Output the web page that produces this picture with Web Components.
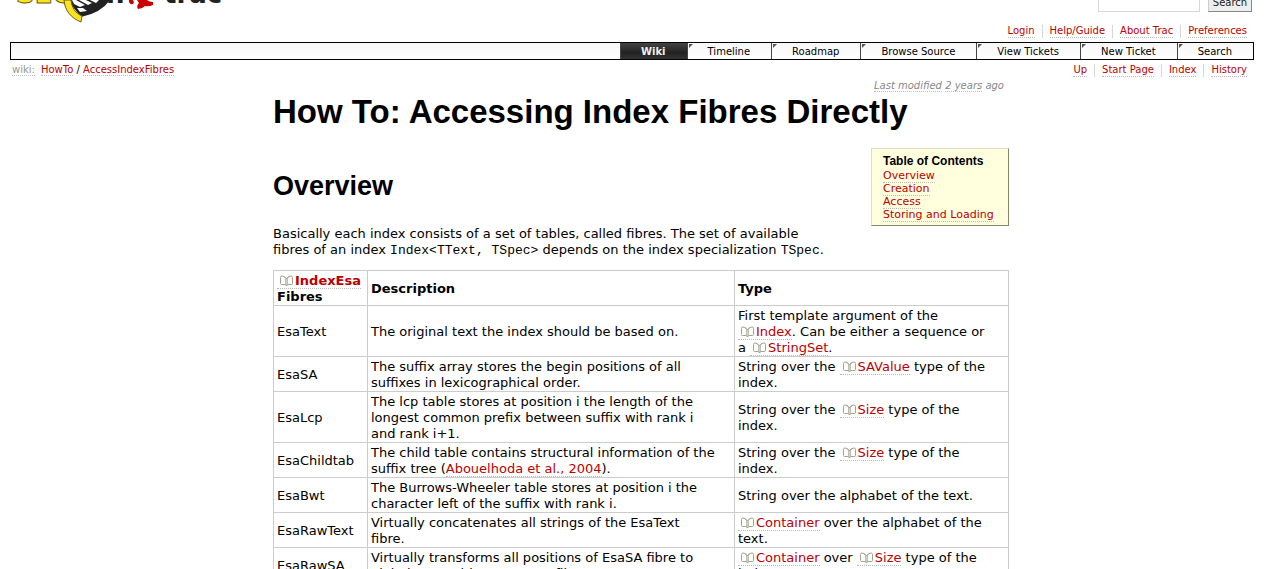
<!DOCTYPE html>
<html lang="en"><head><meta charset="utf-8"><title>AccessIndexFibres</title>
<style>
body{margin:0;background:#fff;color:#000;font:13px/16px "DejaVu Sans",Verdana,sans-serif}
</style></head><body><trac-page></trac-page>
<script>
const LINK='a{color:#b00;text-decoration:none;border-bottom:1px dotted #bbb}';
function define(name,html,after){
  customElements.define(name,class extends HTMLElement{
    constructor(){super();this.attachShadow({mode:'open'}).innerHTML=html;}
    connectedCallback(){if(after)after(this,this.shadowRoot);}
  });
}
define('trac-logo',`<style>
:host{display:block;width:240px;height:24px;overflow:hidden}
svg{display:block}text{font-family:"DejaVu Sans",sans-serif;font-weight:bold}
</style><svg width="240" height="24" role="img" aria-label="SeqAn trac">
<text x="16" y="3" font-size="26" fill="#fde31c" stroke="#665c20" stroke-width="1">SEQ</text>
<text x="86" y="3" font-size="26" fill="#222">An</text>
<path d="M68 0H110Q101 13 81 17Q75 10 68 0Z" fill="#222"/>
<path d="M72 0H76L85 5L80 7L74 4ZM79 0H86L92 3L88 5ZM90 0H99L96 3ZM77 8L83 8L87 11L80 12Z" fill="#fff"/>
<path d="M64 0C65 11 71 18 81 22L82 16C75 13 72 8 71 0Z" fill="#fde31c" stroke="#665c20" stroke-width="1"/>
<path d="M129 0H133L134 3Q131 6 129 2ZM137 0H147Q149 2 153 2V5Q149 7 145 6Q142 9 138 9Q136 6 139 3Z" fill="#c00"/>
<text x="164" y="3" font-size="26" fill="#222">trac</text>
</svg>`);
define('trac-search',`<style>
:host{display:block}form{display:flex;gap:8px;align-items:flex-end}
input{box-sizing:border-box;width:102px;height:20px;border:1px solid #d7d7d7;background:#fff;margin:0}
button{box-sizing:border-box;height:20px;width:44px;padding:0;border:1px solid #ccc;border-right-color:#888;border-bottom-color:#888;background:#eee;color:#222;font:10px "DejaVu Sans",sans-serif}
</style><form role="search"><input type="text" aria-label="Search"><button type="button">Search</button></form>`);
define('trac-links',`<style>${LINK}
:host{display:block;font-size:10px;line-height:12px}
ul{display:flex;list-style:none;margin:0;padding:0}
li{padding:0 7px;border-left:1px solid #d7d7d7}li:first-child{border:0}li:last-child{padding-right:0}
li a{display:block}
</style><ul></ul>`,(h,r)=>{r.querySelector('ul').innerHTML=h.getAttribute('items').split('|').map(t=>'<li><a href="#">'+t+'</a></li>').join('');});
define('trac-tab',`<style>
:host{display:block;border-left:1px solid #444;position:relative}
a{display:block;padding:1px 21px 0 20px;color:#000;text-decoration:none;font-size:10px;line-height:15px}
:host::before{content:"";position:absolute;left:1px;top:1px;border-top:4px solid #555;border-right:4px solid transparent}
:host([active]){background:linear-gradient(#444,#222 60%,#333)}
:host([active])::before{display:none}
:host([active]) a{color:#eee;font-weight:bold}
</style><a href="#"><slot></slot></a>`);
define('trac-nav',`<style>
:host{display:flex;justify-content:flex-end;border:1px solid #000;background:linear-gradient(#f7f7f7,#fff);margin:0 10px}
</style><slot></slot>`);
define('trac-crumbs',`<style>${LINK}
:host{display:block;font-size:10px;line-height:12px}.p{color:#998;border-bottom-color:#bbb;margin-right:6px}
</style><a class="p" href="#">wiki:</a><a href="#">HowTo</a> / <a href="#">AccessIndexFibres</a>`);
define('trac-ref',`<style>${LINK}
:host{display:inline}
svg{width:13px;height:12px;margin:0 2px 0 3px;vertical-align:-2px}
</style><a href="#"><svg viewBox="0 0 13 12" fill="none" stroke="#a3a390"><path d="M5.5 9.5H1.5Q.5 9.5 .5 8.5V2.5Q.5 1 2 1Q5 1 5.8 3.5V10.5H7.2V3.5Q8 1 11 1Q12.5 1 12.5 2.5V8.5Q12.5 9.5 11.5 9.5H7.5"/><path d="M4 1.5L6.5 4L9 1.5"/></svg><slot></slot></a>`);
define('trac-toc',`<style>${LINK}
:host{display:block;box-sizing:border-box;width:138px;background:#ffd;border:1px solid #ddc;border-right-color:#886;border-bottom-color:#886;padding:5px 11px 4px;font-size:11px;line-height:13px;white-space:nowrap}
h4{margin:0;font:bold 12px/15px "Liberation Sans",Arial,sans-serif}
ol{list-style:none;margin:0;padding:0}
</style><h4>Table of Contents</h4><ol><li><a href="#">Overview</a></li><li><a href="#">Creation</a></li><li><a href="#">Access</a></li><li><a href="#">Storing and Loading</a></li></ol>`);
define('fibre-table',`<style>${LINK}
:host{display:block}
table{width:100%;table-layout:fixed;border-collapse:collapse}
td,th{border:1px solid #ccc;padding:2px 3px 0;text-align:left;vertical-align:middle}
.a{width:94px}.b{width:367px}
</style><table><colgroup><col class="a"><col class="b"><col></colgroup>
<thead><tr><th><trac-ref>IndexEsa</trac-ref> Fibres</th><th>Description</th><th>Type</th></tr></thead><tbody>
<tr><td>EsaText</td><td>The original text the index should be based on.</td><td>First template argument of the<br><trac-ref>Index</trac-ref>. Can be either a sequence or<br>a <trac-ref>StringSet</trac-ref>.</td></tr>
<tr><td>EsaSA</td><td>The suffix array stores the begin positions of all<br>suffixes in lexicographical order.</td><td>String over the <trac-ref>SAValue</trac-ref> type of the<br>index.</td></tr>
<tr><td>EsaLcp</td><td>The lcp table stores at position i the length of the<br>longest common prefix between suffix with rank i<br>and rank i+1.</td><td>String over the <trac-ref>Size</trac-ref> type of the<br>index.</td></tr>
<tr><td>EsaChildtab</td><td>The child table contains structural information of the<br>suffix tree (<a href="#">Abouelhoda et al., 2004</a>).</td><td>String over the <trac-ref>Size</trac-ref> type of the<br>index.</td></tr>
<tr><td>EsaBwt</td><td>The Burrows-Wheeler table stores at position i the<br>character left of the suffix with rank i.</td><td>String over the alphabet of the text.</td></tr>
<tr><td>EsaRawText</td><td>Virtually concatenates all strings of the EsaText<br>fibre.</td><td><trac-ref>Container</trac-ref> over the alphabet of the<br>text.</td></tr>
<tr><td>EsaRawSA</td><td>Virtually transforms all positions of EsaSA fibre to<br>global ones with an EsaText fibre.</td><td><trac-ref>Container</trac-ref> over <trac-ref>Size</trac-ref> type of the<br>index.</td></tr>
</tbody></table>`);
define('wiki-article',`<style>${LINK}
:host{display:block;max-width:736px;margin:0 auto;padding-left:18px}
.mod{font-size:10px;line-height:12px;font-style:italic;color:#888;text-align:right;margin:0;padding-right:5px}
.mod a{color:#888}
h1,h2{font-family:"Liberation Sans",Arial,sans-serif;margin:0}
h1{font-size:33px;line-height:40px;margin-bottom:16px}
h2{font-size:27px;line-height:32px;margin-bottom:24px;padding-top:22px}
trac-toc{float:right}
p{margin:0 0 11px}
tt{font-family:"Liberation Mono",monospace;font-size:13px}
fibre-table{clear:both}
</style><p class="mod"><a href="#">Last modified</a> <a href="#">2 years</a> ago</p>
<h1>How To: Accessing Index Fibres Directly</h1>
<trac-toc></trac-toc>
<h2>Overview</h2>
<p>Basically each index consists of a set of tables, called fibres. The set of available<br>fibres of an index <tt>Index&lt;TText, TSpec&gt;</tt> depends on the index specialization <tt>TSpec</tt>.</p>
<fibre-table></fibre-table>`);
define('trac-page',`<style>
:host{display:block;height:100vh;overflow:hidden}
header{display:flex;justify-content:space-between;align-items:flex-start;height:25px}
trac-search{margin:-8px 12px 0 0}
.row{display:flex;justify-content:space-between}
.meta{justify-content:flex-end;padding:0 17px 4px 0}
.ctx{padding:4px 17px 3px 12px}
</style><header><trac-logo></trac-logo><trac-search></trac-search></header>
<div class="row meta"><trac-links items="Login|Help/Guide|About Trac|Preferences"></trac-links></div>
<trac-nav><trac-tab active>Wiki</trac-tab><trac-tab>Timeline</trac-tab><trac-tab>Roadmap</trac-tab><trac-tab>Browse Source</trac-tab><trac-tab>View Tickets</trac-tab><trac-tab>New Ticket</trac-tab><trac-tab>Search</trac-tab></trac-nav>
<div class="row ctx"><trac-crumbs></trac-crumbs><trac-links items="Up|Start Page|Index|History"></trac-links></div>
<wiki-article></wiki-article>`);
</script></body></html>
